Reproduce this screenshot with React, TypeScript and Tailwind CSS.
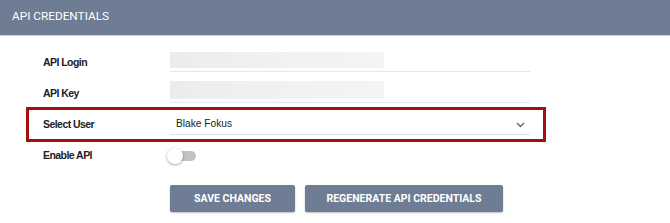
import React from "react";

const labelCls =
  "pl-[15px] text-[10.5px] font-bold tracking-[-0.55px] text-[#222222] [font-family:'Liberation_Sans',Arial,sans-serif]";

function Row({
  label,
  children,
  highlight,
}: {
  label: string;
  children: React.ReactNode;
  highlight?: boolean;
}) {
  return (
    <div
      className={
        "grid h-[31px] grid-cols-[142px_360px] items-center" +
        (highlight ? " outline-[3px] outline-solid outline-[#a50f12] -outline-offset-1" : "")
      }
    >
      <div className={labelCls}>{label}</div>
      {children}
    </div>
  );
}

function Redacted({ h, pb }: { h: string; pb: string }) {
  return (
    <div className="flex h-[31px] flex-col justify-end pb-[6px]">
      <div className={"border-b border-[#e6e6e6] " + pb}>
        <div
          className={
            "w-[214px] bg-gradient-to-r from-[#ececec] via-[#f1f1f1] to-[#f4f4f4] " + h
          }
        />
      </div>
    </div>
  );
}

export default function App() {
  return (
    <div className="h-[223px] w-[670px] bg-white [font-family:'Liberation_Sans',Arial,sans-serif]">
      <div className="flex h-[36px] items-center border-b border-[#c9ced8] bg-[#6e7c94] pl-[12px] pb-[1px]">
        <span className="text-[11.8px] text-white [font-family:Roboto,sans-serif]">
          API CREDENTIALS
        </span>
      </div>
      <div className="ml-[28px] mt-[11px] flex w-[516px] flex-col">
        <Row label="API Login">
          <Redacted h="h-[16px]" pb="pb-[3px]" />
        </Row>
        <Row label="API Key">
          <Redacted h="h-[18px]" pb="pb-[3px]" />
        </Row>
        <Row label="Select User" highlight>
          <div className="flex h-[31px] flex-col justify-end pb-[5px]">
            <div className="flex items-center justify-between border-b border-[#e2e2e2] pb-[3px] pl-[6px] pr-[5px]">
              <span className="text-[10.2px] text-[#222222]">Blake Fokus</span>
              <svg width="9" height="6" viewBox="0 0 9 6" className="mt-[3px]">
                <path d="M1 1l3.5 3.5L8 1" fill="none" stroke="#666" strokeWidth="1.4" />
              </svg>
            </div>
          </div>
        </Row>
        <Row label="Enable API">
          <div className="relative h-[16px] w-[30px]">
            <div className="absolute left-[4px] top-[3px] h-[10px] w-[22px] rounded-full bg-[#c2c2c2]" />
            <div className="absolute left-[-3px] top-0 h-[16px] w-[16px] rounded-full bg-white shadow-[0_1px_3px_rgba(0,0,0,0.35)]" />
          </div>
        </Row>
      </div>
      <div className="ml-[170px] mt-[14px] flex gap-[10px]">
        <button className="h-[27px] w-[125px] rounded-[2px] bg-[#6e7c94] text-[10.5px] font-bold text-white shadow-[0_1px_2px_rgba(0,0,0,0.25)] [font-family:Roboto,sans-serif]">
          SAVE CHANGES
        </button>
        <button className="h-[27px] w-[198px] rounded-[2px] bg-[#6e7c94] text-[10.5px] font-bold text-white shadow-[0_1px_2px_rgba(0,0,0,0.25)] [font-family:Roboto,sans-serif]">
          REGENERATE API CREDENTIALS
        </button>
      </div>
    </div>
  );
}
